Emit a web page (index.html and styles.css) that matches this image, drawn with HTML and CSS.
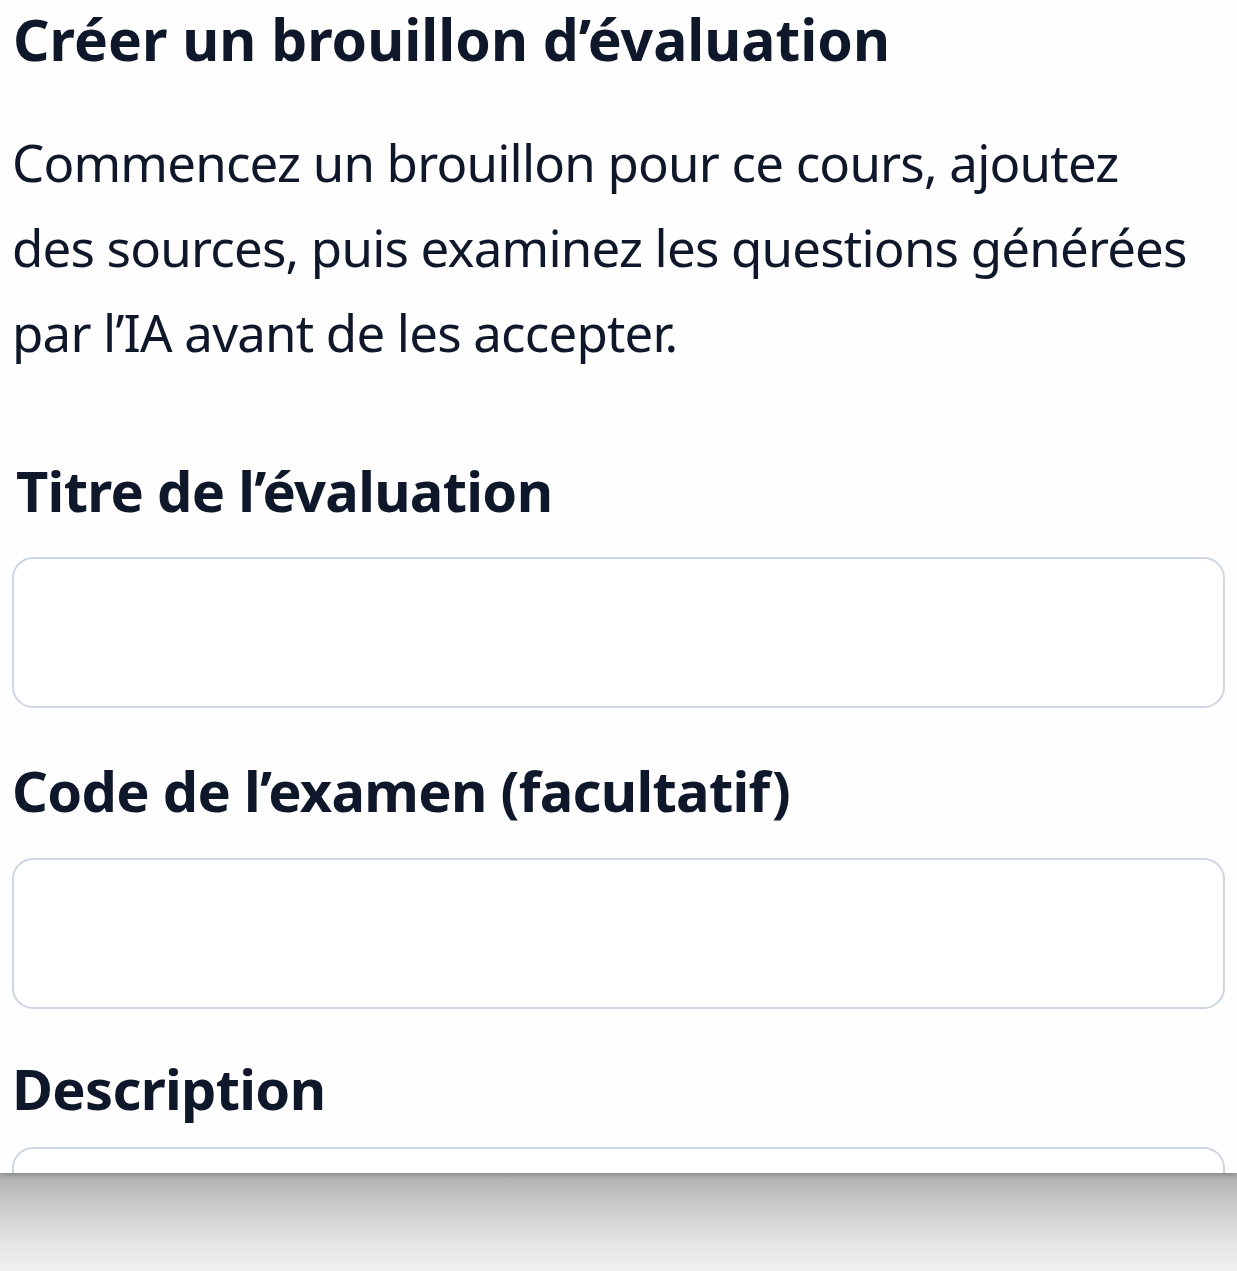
FILE: index.html
```html
<!DOCTYPE html>
<html lang="fr">
<head>
<meta charset="utf-8">
<title>Créer un brouillon d’évaluation</title>
<link rel="stylesheet" href="styles.css">
</head>
<body>
<div class="panel">
  <h1 class="title">Créer un brouillon d’évaluation</h1>
  <p class="intro">Commencez un brouillon pour ce cours, ajoutez des sources, puis examinez les questions générées par l’IA avant de les accepter.</p>
  <form class="form">
    <label class="label label-first" for="t">Titre de l’évaluation</label>
    <input class="field field-first" id="t" type="text">
    <label class="label label-second" for="c">Code de l’examen (facultatif)</label>
    <input class="field" id="c" type="text">
    <label class="label label-desc" for="d">Description</label>
    <textarea class="field area" id="d"></textarea>
  </form>
</div>
<div class="backdrop"></div>
</body>
</html>
```
FILE: styles.css
```css
html, body {
  margin: 0;
  padding: 0;
  background: #ffffff;
}
body {
  font-family: "Noto Sans", "Open Sans", sans-serif;
  color: #0f172a;
  width: 1237px;
  overflow: hidden;
}
.panel {
  height: 1173px;
  box-sizing: border-box;
  padding: 0 12px;
  overflow: hidden;
  background: #fefefe;
  position: relative;
  z-index: 1;
  box-shadow: 0 2px 6px rgba(0, 0, 0, 0.25);
}
.title {
  margin: 0;
  padding-left: 1px;
  font-size: 57px;
  line-height: 79px;
  font-weight: 700;
  letter-spacing: 0;
}
.intro {
  width: 1190px;
  margin: 41px 0 0 0;
  font-size: 51px;
  line-height: 85px;
  font-weight: 400;
  letter-spacing: -0.8px;
}
.form {
  display: flex;
  flex-direction: column;
}
.label {
  display: block;
  padding-left: 0;
  font-size: 56px;
  line-height: 79px;
  font-weight: 700;
  letter-spacing: -0.7px;
}
.label-first {
  margin-top: 76px;
  padding-left: 4px;
}
.label-second {
  margin-top: 43px;
}
.field {
  display: block;
  box-sizing: border-box;
  width: 100%;
  height: 151px;
  margin-top: 28px;
  border: 2px solid #cdd6e2;
  border-radius: 21px;
  background: #ffffff;
  font: inherit;
  outline: none;
}
.field-first {
  margin-top: 27px;
}
.label-desc {
  margin-top: 40px;
}
.area {
  margin-top: 19px;
  resize: none;
}
.backdrop {
  height: 98px;
  background: linear-gradient(180deg, #b0b0b0 0%, #cbcbcb 35%, #e4e4e4 70%, #f0f0f0 100%);
}
```
